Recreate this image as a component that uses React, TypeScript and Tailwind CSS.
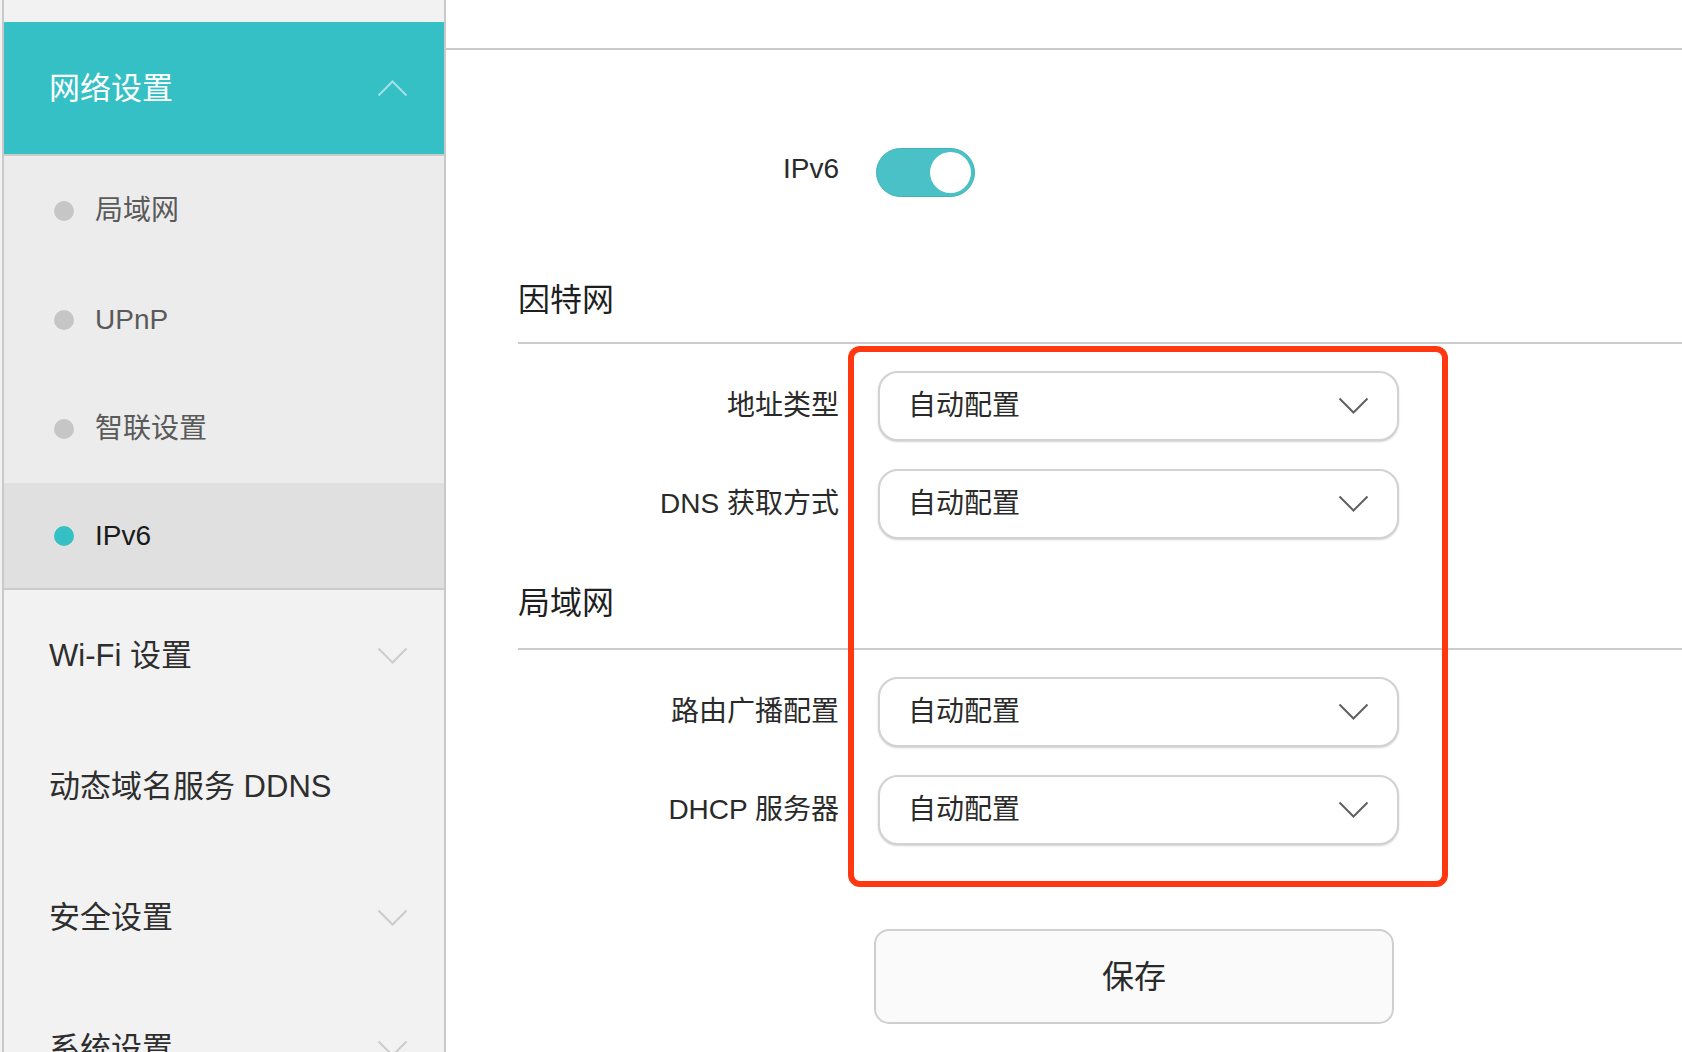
import React from "react";

const FONT = { fontFamily: '"Liberation Sans", "Noto Sans CJK SC", sans-serif' };

function ChevronDown({ className }: { className?: string }) {
  return (
    <svg width="31" height="18" viewBox="0 0 31 18" fill="none" className={className}>
      <path d="M1.5 1.5 L15.5 15.5 L29.5 1.5" stroke="currentColor" strokeWidth="2" />
    </svg>
  );
}

function ChevronUp({ className }: { className?: string }) {
  return (
    <svg width="31" height="18" viewBox="0 0 31 18" fill="none" className={className}>
      <path d="M1.5 16.5 L15.5 2.5 L29.5 16.5" stroke="currentColor" strokeWidth="2" />
    </svg>
  );
}

function SubItem({ label, active, h }: { label: string; active?: boolean; h: string }) {
  return (
    <div className={`flex items-center shrink-0 pl-[50px] ${h} ${active ? "bg-[#e0e0e0]" : "bg-[#ececec]"}`}>
      <span className={`w-[20px] h-[20px] rounded-full ${active ? "bg-[#35c0c5]" : "bg-[#c6c6c6]"}`} />
      <span className={`ml-[21px] text-[28px] leading-none ${active ? "text-[#1a1a1a]" : "text-[#5a5a5a]"}`}>{label}</span>
    </div>
  );
}

function MainItem({ label, chevron }: { label: string; chevron?: boolean }) {
  return (
    <div className="flex items-center justify-between h-[131px] pl-[45px] pr-[36px] bg-[#f2f2f2] shrink-0">
      <span className="text-[31px] leading-none text-[#2e2e2e]">{label}</span>
      {chevron && <ChevronDown className="text-[#cccccc]" />}
    </div>
  );
}

function SelectRow({ label, className }: { label: string; className?: string }) {
  return (
    <div className={`flex items-center ${className ?? ""}`}>
      <div className="w-[321px] text-right text-[28px] leading-none text-[#2a2a2a]">{label}</div>
      <div className="ml-[39px] w-[521px] h-[70px] rounded-[20px] border-2 border-[#d2d2d2] shadow-[0_1px_2px_rgba(0,0,0,0.18)] bg-white flex items-center justify-between pl-[28px] pr-[28px]">
        <span className="text-[28px] leading-none text-[#2a2a2a]">自动配置</span>
        <ChevronDown className="text-[#606060]" />
      </div>
    </div>
  );
}

export default function App() {
  return (
    <div className="relative flex h-[1052px] w-[1682px] overflow-hidden bg-white" style={FONT}>
      {/* Sidebar */}
      <div className="pl-[2px] bg-[#f2f2f2] shrink-0">
        <div className="w-[444px] h-[1052px] border-l-2 border-r-2 border-[#c9c9c9] bg-[#f2f2f2] flex flex-col overflow-hidden">
          <div className="h-[22px] shrink-0" />
          <div className="h-[132px] shrink-0 bg-[#35c0c5] flex items-center justify-between pl-[45px] pr-[36px]">
            <span className="text-[31px] leading-none text-white">网络设置</span>
            <ChevronUp className="text-[#a3e0e3]" />
          </div>
          <div className="h-[2px] shrink-0 bg-[#cbcbcb]" />
          <SubItem label="局域网" h="h-[109px]" />
          <SubItem label="UPnP" h="h-[109px]" />
          <SubItem label="智联设置" h="h-[109px]" />
          <SubItem label="IPv6" h="h-[105px]" active />
          <div className="h-[2px] shrink-0 bg-[#cbcbcb]" />
          <MainItem label="Wi-Fi 设置" chevron />
          <MainItem label="动态域名服务 DDNS" />
          <MainItem label="安全设置" chevron />
          <MainItem label="系统设置" chevron />
        </div>
      </div>

      {/* Main */}
      <div className="flex-1 flex flex-col">
        <div className="h-[50px] shrink-0 border-b-2 border-[#cacaca]" />
        <div className="pl-[72px] flex flex-col">
          <div className="flex items-center mt-[98px] h-[49px]">
            <div className="w-[321px] pb-[8px] text-right text-[28px] leading-none text-[#2a2a2a]">IPv6</div>
            <div className="ml-[37px] w-[99px] h-[49px] rounded-full bg-[#4ac1c6] border border-[#3fb3b8] flex items-center justify-end pr-[3px]">
              <span className="w-[41px] h-[41px] rounded-full bg-white" />
            </div>
          </div>

          <div className="mt-[83px] h-[40px] flex items-center text-[32px] leading-none text-[#1f1f1f]">因特网</div>
          <div className="mt-[22px] h-[2px] bg-[#cccccc]" />

          <SelectRow label="地址类型" className="mt-[27px]" />
          <SelectRow label="DNS 获取方式" className="mt-[28px]" />

          <div className="mt-[44px] h-[40px] flex items-center text-[32px] leading-none text-[#1f1f1f]">局域网</div>
          <div className="mt-[25px] h-[2px] bg-[#cccccc]" />

          <SelectRow label="路由广播配置" className="mt-[27px]" />
          <SelectRow label="DHCP 服务器" className="mt-[28px]" />

          <div className="mt-[84px] ml-[356px] w-[520px] h-[95px] rounded-[15px] border-2 border-[#cfcfcf] bg-[#fafafa] flex items-center justify-center">
            <span className="text-[32px] leading-none text-[#2a2a2a]">保存</span>
          </div>
        </div>
      </div>

      {/* Red annotation box */}
      <div className="absolute left-[848px] top-[346px] w-[600px] h-[541px] rounded-[12px] border-[6px] border-[#ff3811] pointer-events-none" />
    </div>
  );
}
